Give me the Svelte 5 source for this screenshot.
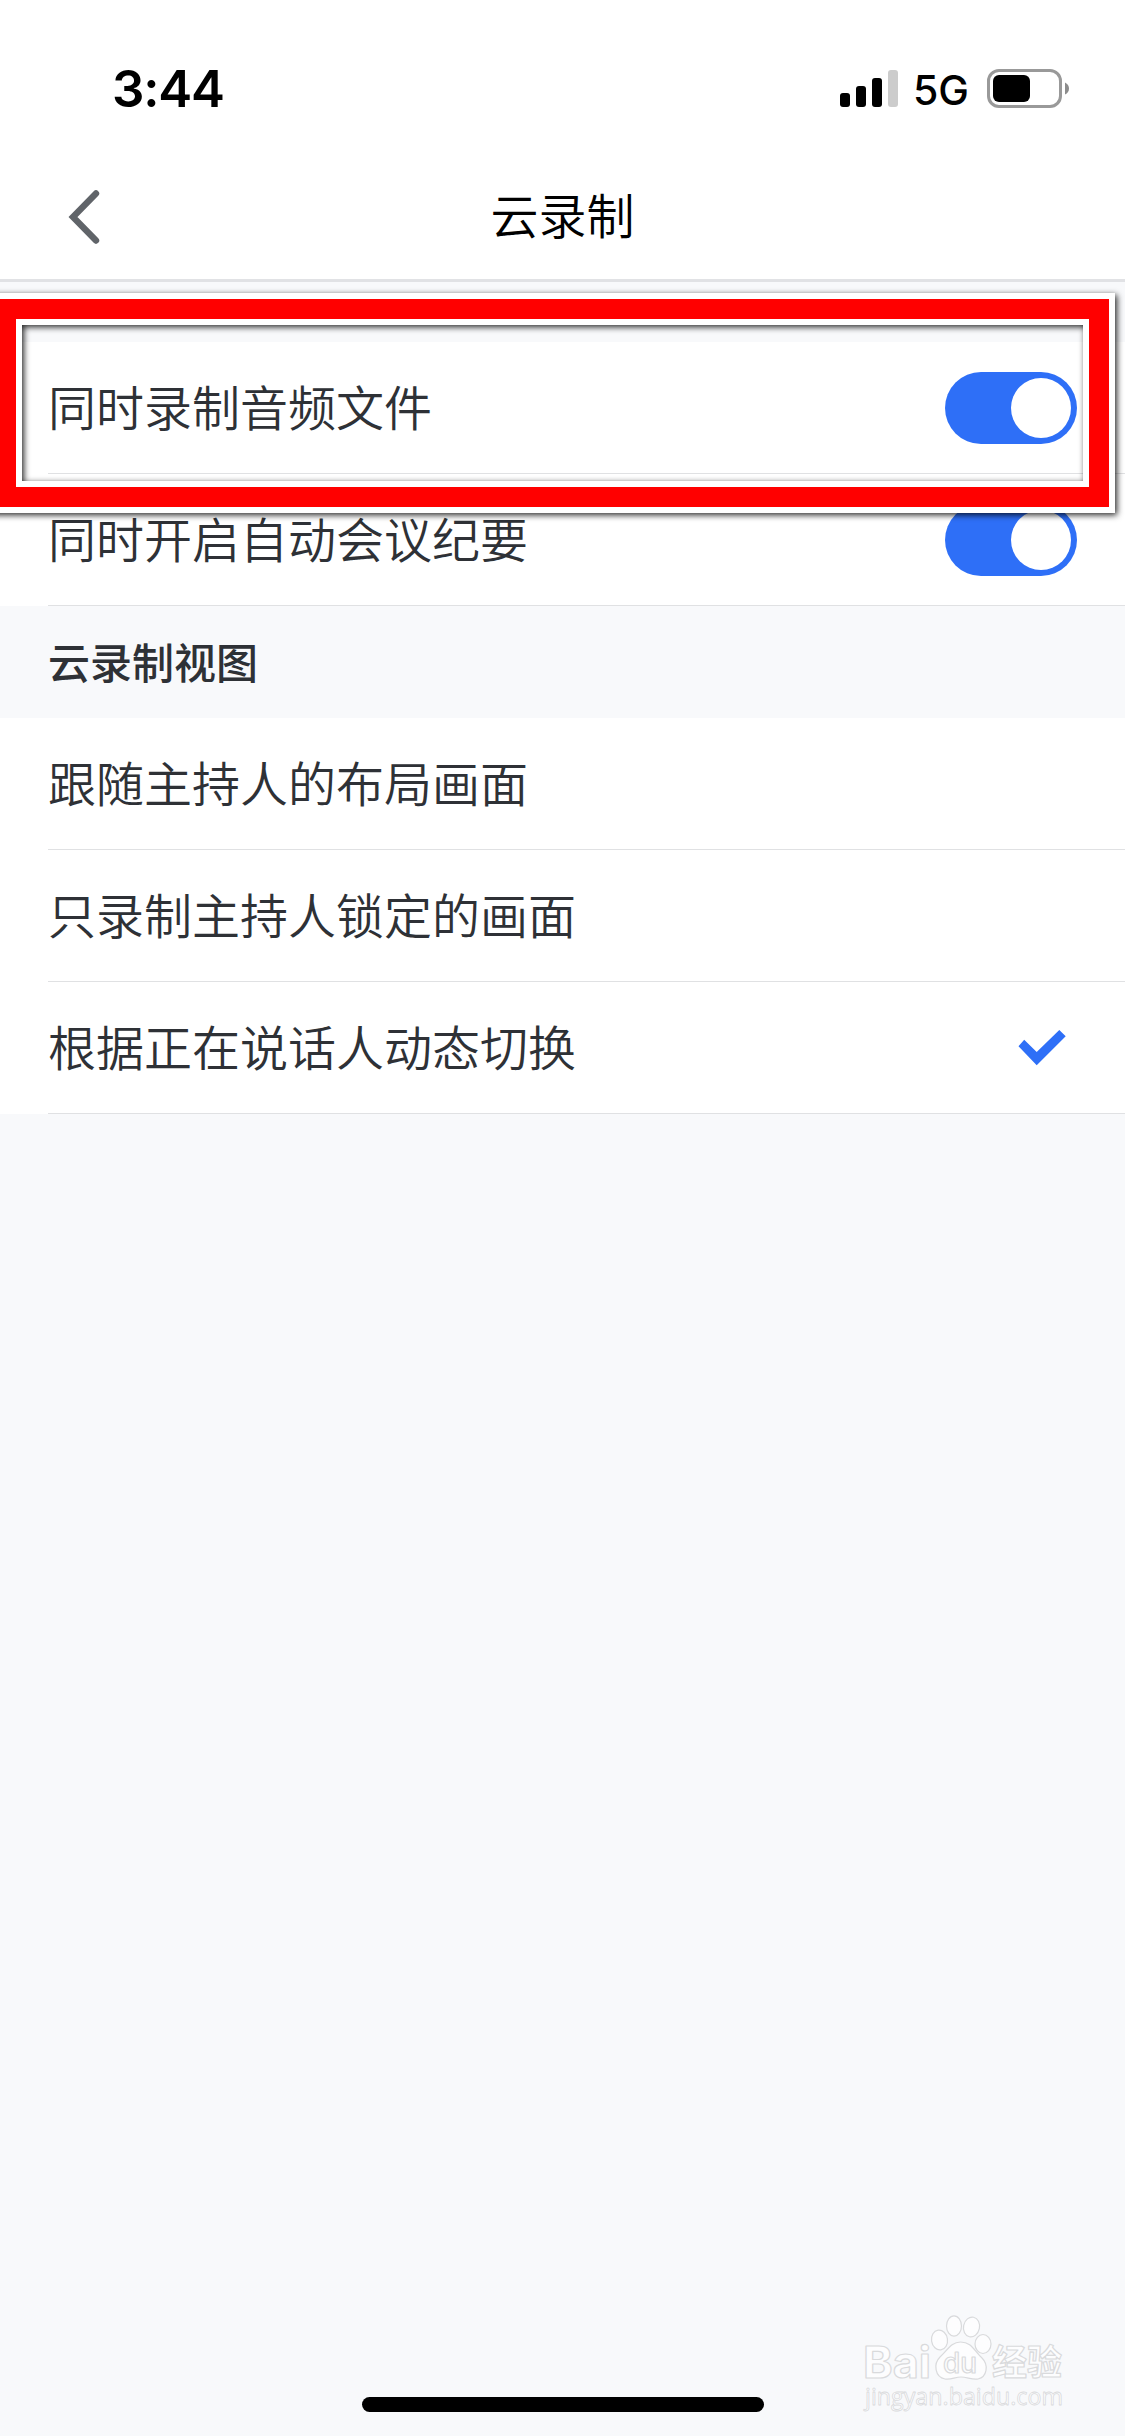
<script>
  const toggles = $state([
    { label: '同时录制音频文件', on: true },
    { label: '同时开启自动会议纪要', on: true },
  ]);
  const views = ['跟随主持人的布局画面', '只录制主持人锁定的画面', '根据正在说话人动态切换'];
  let selected = $state(2);
</script>

<div class="screen">
  <header>
    <div class="status">
      <span class="time">3:44</span>
      <div class="indicators">
        <svg class="signal" width="58" height="37" viewBox="0 0 58 37">
          <rect x="0" y="23" width="10" height="14" rx="3" />
          <rect x="16" y="16" width="10" height="21" rx="3" />
          <rect x="32" y="8" width="10" height="29" rx="3" />
          <rect x="48" y="0" width="10" height="37" rx="3" fill="#ccc" />
        </svg>
        <span class="network">5G</span>
        <svg class="battery" width="82" height="39" viewBox="0 0 82 39">
          <rect x="1.5" y="1.5" width="72" height="36" rx="10.5" fill="none" stroke="#999" stroke-width="3" />
          <rect x="6" y="6" width="37" height="27" rx="6" />
          <path d="M78 13.5Q82 15.5 82 19.5T78 25.5Z" fill="#8c8c8c" />
        </svg>
      </div>
    </div>
    <nav>
      <button class="back" aria-label="返回">
        <svg width="32" height="54" viewBox="0 0 32 54">
          <path d="M28 3.5L5 27L28 50.5" fill="none" stroke="#606469" stroke-width="6.4" stroke-linecap="round" stroke-linejoin="miter" />
        </svg>
      </button>
      <h1>云录制</h1>
    </nav>
  </header>

  <main>
    <section class="group first">
      {#each toggles as item}
        <div class="row">
          <span>{item.label}</span>
          <button class="switch" class:on={item.on} aria-label={item.label} onclick={() => (item.on = !item.on)}>
            <i></i>
          </button>
        </div>
      {/each}
      <div class="highlight"><div class="red"><div class="inner"></div></div></div>
    </section>
    <h2>云录制视图</h2>
    <section class="group">
      {#each views as view, i}
        <button class="row option" onclick={() => (selected = i)}>
          <span>{view}</span>
          {#if selected === i}
            <svg class="check" width="48" height="36" viewBox="0 0 48 36">
              <path d="M.5 16.2L6.2 9.8L18.7 22L41.3 0L47.7 6.2L18.7 35.2Z" fill="#2e6ff7" />
            </svg>
          {/if}
        </button>
      {/each}
    </section>
  </main>

  <svg class="watermark" width="214" height="120" viewBox="0 0 214 120">
    <g fill="#fdfdfe" stroke="#d9dadc" stroke-width="1.2" stroke-linejoin="round">
      <text class="latin" x="7" y="78" font-size="44" textLength="68" lengthAdjust="spacingAndGlyphs">Bai</text>
      <ellipse cx="83.5" cy="40" rx="8" ry="10" transform="rotate(-8 83.5 40)" />
      <ellipse cx="98" cy="26" rx="7.5" ry="10.2" />
      <ellipse cx="115.500" cy="27" rx="8" ry="10" transform="rotate(12 115.500 27)" />
      <ellipse cx="127" cy="44" rx="8" ry="9.5" />
      <path d="M104.500 42C95 42 91 51 84 57C77 64 79 77 89 79C95 80 99 77 105 77C111 77 116 80 122 79C131 77 133 65 126 58C118 51 116 42 104.500 42Z" />
      <text class="latin du" x="87" y="73" font-size="28" textLength="34" lengthAdjust="spacingAndGlyphs">du</text>
      <text class="cjk" x="136" y="75" font-size="35">经验</text>
      <text class="url" x="9" y="105" font-size="24" textLength="198" lengthAdjust="spacingAndGlyphs">jingyan.baidu.com</text>
    </g>
  </svg>
  <div class="home"></div>
</div>

<style>
  :global(body) {
    margin: 0;
  }
  .screen {
    position: relative;
    box-sizing: border-box;
    width: 1125px;
    height: 2436px;
    overflow: hidden;
    background: #f8f9fb;
    color: #2e3136;
    font-family: Inter, 'Noto Sans CJK SC', sans-serif;
  }
  button {
    padding: 0;
    border: 0;
    background: none;
    color: inherit;
    font: inherit;
    text-align: left;
  }
  svg {
    display: block;
  }
  header {
    box-sizing: border-box;
    height: 282px;
    border-bottom: 3px solid #e1e2e5;
    background: #fff;
    color: #000;
  }
  .status {
    display: flex;
    justify-content: space-between;
    box-sizing: border-box;
    height: 155px;
    padding: 59px 56px 0 112px;
  }
  .time {
    font-size: 51px;
    font-weight: 600;
    letter-spacing: -1.2px;
    line-height: 60px;
  }
  .indicators {
    display: flex;
    align-items: flex-start;
  }
  .signal {
    margin: 11px 15px 0 0;
  }
  .network {
    width: 74px;
    font-size: 41px;
    font-weight: 500;
    line-height: 62px;
  }
  .battery {
    margin-top: 10px;
  }
  nav {
    display: grid;
    grid-template-columns: 200px 1fr 200px;
    align-items: center;
    height: 124px;
  }
  .back {
    padding-left: 68px;
  }
  h1 {
    margin: 0;
    font-size: 48px;
    font-weight: 350;
    line-height: 70px;
    text-align: center;
  }
  main {
    padding-top: 60px;
  }
  .group {
    position: relative;
    background: #fff;
  }
  .row {
    display: flex;
    align-items: center;
    justify-content: space-between;
    box-sizing: border-box;
    width: 100%;
    height: 132px;
    padding: 0 48px;
    background: linear-gradient(#e0e1e3, #e0e1e3) 48px 100% / 100% 1px no-repeat;
    font-size: 48px;
    font-weight: 350;
    line-height: 70px;
  }
  .row span {
    padding-top: 2px;
  }
  .option {
    padding-right: 59px;
  }
  .check {
    margin-bottom: 1px;
  }
  .switch {
    display: flex;
    box-sizing: border-box;
    width: 132px;
    height: 72px;
    padding: 6px;
    border-radius: 36px;
    background: #c9ccd1;
  }
  .switch.on {
    justify-content: flex-end;
    background: #2e6ff7;
  }
  .switch i {
    width: 60px;
    height: 60px;
    border-radius: 50%;
    background: #fff;
  }
  h2 {
    box-sizing: border-box;
    height: 112px;
    margin: 0;
    padding: 2px 0 0 48px;
    font-size: 42px;
    font-weight: 500;
    line-height: 112px;
  }
  .highlight {
    position: absolute;
    top: -49px;
    left: -10px;
    box-sizing: border-box;
    width: 1124.5px;
    height: 219.5px;
    border: 6px solid #fff;
    filter: drop-shadow(2px 2px 3px rgba(0, 0, 0, 0.85));
    pointer-events: none;
  }
  .red {
    box-sizing: border-box;
    height: 100%;
    border: 20px solid #f00;
  }
  .inner {
    box-sizing: border-box;
    height: 100%;
    border: 6px solid #fff;
  }
  .watermark {
    position: absolute;
    top: 2300px;
    left: 856px;
  }
  .latin {
    font-family: Inter, sans-serif;
    font-weight: 700;
  }
  .du {
    font-weight: 500;
  }
  .cjk {
    font-family: 'Noto Sans CJK SC', sans-serif;
    font-weight: 700;
  }
  .url {
    font-family: 'Open Sans', sans-serif;
    stroke-width: 0.8px;
  }
  .home {
    position: absolute;
    top: 2397px;
    left: 362px;
    width: 402px;
    height: 15px;
    border-radius: 8px;
    background: #000;
  }
</style>
